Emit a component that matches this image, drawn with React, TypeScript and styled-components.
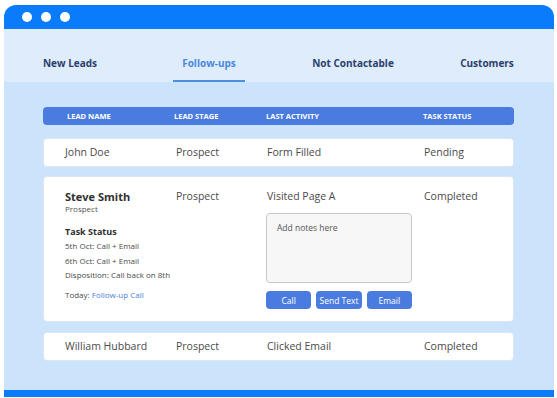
import styled, { createGlobalStyle } from 'styled-components'

const GlobalStyle = createGlobalStyle`
  * { box-sizing: border-box; }
  body {
    margin: 0;
    background: #ffffff;
    font-family: "Open Sans", "Noto Sans", sans-serif;
  }
`

const Window = styled.div`
  display: flex;
  flex-direction: column;
  margin: 5px 0 0 4px;
  width: 550px;
  height: 392px;
  border-radius: 12px 12px 0 0;
  overflow: hidden;
  border-bottom: 7px solid #0a7bfb;
`

const TitleBar = styled.div`
  display: flex;
  align-items: center;
  gap: 9px;
  height: 24px;
  padding-left: 18px;
  background: #0a7bfb;
`

const Dot = styled.span`
  width: 10px;
  height: 10px;
  border-radius: 50%;
  background: #ffffff;
`

const TabBar = styled.nav`
  display: grid;
  grid-template-columns: 132px 146px 142px 126px;
  align-items: end;
  justify-items: center;
  height: 53px;
  background: #deecfc;
`

const Tab = styled.div<{ $active?: boolean }>`
  padding: 0 9px 10px;
  line-height: 14px;
  font-size: 10px;
  font-weight: 700;
  color: ${(p) => (p.$active ? '#4a88dc' : '#2b3f6c')};
  border-bottom: 2px solid ${(p) => (p.$active ? '#4a8ee0' : 'transparent')};
`

const Content = styled.main`
  flex: 1;
  display: flex;
  flex-direction: column;
  gap: 10px;
  padding: 25px 40px 0 39px;
  background: #cbe3fb;
`

const HeaderRow = styled.div`
  display: grid;
  grid-template-columns: 107px 92px 157px 1fr;
  align-items: center;
  height: 18px;
  padding-left: 24px;
  margin-bottom: 3px;
  border-radius: 4px;
  background: #4a7ce0;
`

const HeaderCell = styled.span`
  font-size: 7.5px;
  font-weight: 700;
  color: #ffffff;
  text-transform: uppercase;
`

const Row = styled.div`
  display: grid;
  grid-template-columns: 111px 91px 157px 1fr;
  align-items: center;
  height: 29px;
  padding-left: 21px;
  border-radius: 4px;
  border: 1px solid #dbe6f2;
  background: #ffffff;
`

const ExpandedRow = styled(Row)`
  align-items: start;
  height: auto;
  margin-top: -1px;
  padding: 12px 0 12px 21px;
`

const Cell = styled.span`
  font-size: 10.5px;
  line-height: 15px;
  color: #4a4a4a;
`

const NameBlock = styled.div`
  display: flex;
  flex-direction: column;
`

const Name = styled.span`
  font-size: 11px;
  line-height: 15px;
  font-weight: 700;
  color: #2f2f2f;
`

const SubText = styled.span`
  font-size: 8px;
  line-height: 10px;
  color: #555555;
`

const TaskTitle = styled.span`
  margin-top: 11px;
  font-size: 9px;
  line-height: 14px;
  font-weight: 700;
  color: #2f2f2f;
`

const TaskLine = styled.span<{ $gap?: number }>`
  margin-top: ${(p) => p.$gap ?? 0}px;
  font-size: 8px;
  line-height: 14.5px;
  color: #4a4a4a;
`

const Link = styled.span`
  color: #4a82d6;
`

const ActivityBlock = styled.div`
  display: flex;
  flex-direction: column;
`

const Notes = styled.textarea`
  width: 146px;
  height: 70px;
  margin: 9px 0 0 -1px;
  padding: 8px 10px;
  resize: none;
  border: 1px solid #c9c9c9;
  border-radius: 4px;
  background: #f7f7f7;
  font-family: inherit;
  font-size: 8.5px;
  outline: none;

  &::placeholder {
    color: #555555;
  }
`

const Actions = styled.div`
  display: grid;
  grid-template-columns: repeat(3, 1fr);
  gap: 5px;
  width: 146px;
  margin: 8px 0 0 -1px;
`

const ActionButton = styled.button`
  height: 18px;
  padding: 0;
  border: none;
  border-radius: 4px;
  background: #4a7ce0;
  color: #ffffff;
  font-family: inherit;
  font-size: 8.5px;
`

const tabs = ['New Leads', 'Follow-ups', 'Not Contactable', 'Customers']

export default function App() {
  return (
    <>
      <GlobalStyle />
      <Window>
        <TitleBar>
          <Dot />
          <Dot />
          <Dot />
        </TitleBar>
        <TabBar>
          {tabs.map((t) => (
            <Tab key={t} $active={t === 'Follow-ups'}>
              {t}
            </Tab>
          ))}
        </TabBar>
        <Content>
          <HeaderRow>
            <HeaderCell>Lead Name</HeaderCell>
            <HeaderCell>Lead Stage</HeaderCell>
            <HeaderCell>Last Activity</HeaderCell>
            <HeaderCell>Task Status</HeaderCell>
          </HeaderRow>

          <Row>
            <Cell>John Doe</Cell>
            <Cell>Prospect</Cell>
            <Cell>Form Filled</Cell>
            <Cell>Pending</Cell>
          </Row>

          <ExpandedRow>
            <NameBlock>
              <Name>Steve Smith</Name>
              <SubText>Prospect</SubText>
              <TaskTitle>Task Status</TaskTitle>
              <TaskLine>5th Oct: Call + Email</TaskLine>
              <TaskLine>6th Oct: Call + Email</TaskLine>
              <TaskLine>Disposition: Call back on 8th</TaskLine>
              <TaskLine $gap={5}>
                Today: <Link>Follow-up Call</Link>
              </TaskLine>
            </NameBlock>
            <Cell>Prospect</Cell>
            <ActivityBlock>
              <Cell>Visited Page A</Cell>
              <Notes placeholder="Add notes here" />
              <Actions>
                <ActionButton>Call</ActionButton>
                <ActionButton>Send Text</ActionButton>
                <ActionButton>Email</ActionButton>
              </Actions>
            </ActivityBlock>
            <Cell>Completed</Cell>
          </ExpandedRow>

          <Row>
            <Cell>William Hubbard</Cell>
            <Cell>Prospect</Cell>
            <Cell>Clicked Email</Cell>
            <Cell>Completed</Cell>
          </Row>
        </Content>
      </Window>
    </>
  )
}
